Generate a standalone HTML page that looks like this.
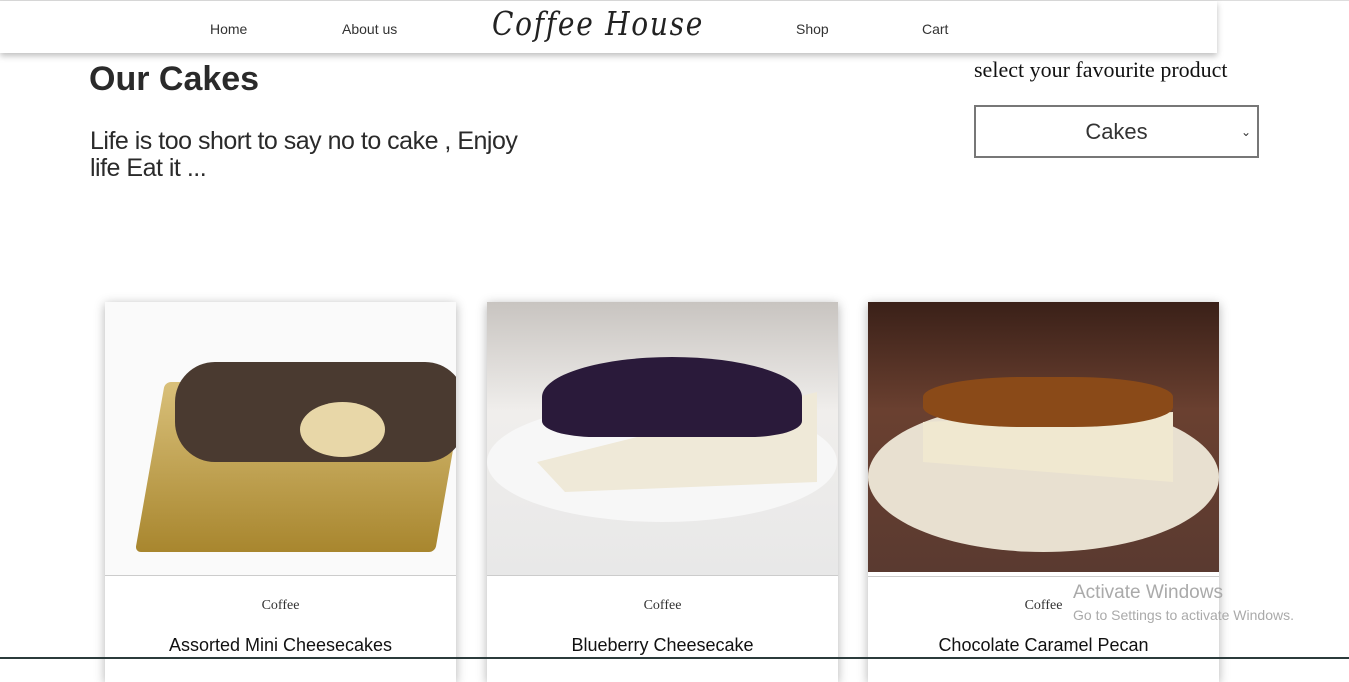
<!DOCTYPE html>
<html><head><meta charset="utf-8"><style>
*{margin:0;padding:0;box-sizing:border-box}
body{width:1349px;height:659px;overflow:hidden;background:#fff;font-family:"Liberation Sans",sans-serif;position:relative;color:#222}
.top{position:absolute;left:0;top:0;width:1349px;height:1px;background:#ddd}
nav{position:absolute;left:0;top:1px;width:1217px;height:52px;background:#fff;box-shadow:0 3px 6px rgba(0,0,0,.25)}
nav a{position:absolute;top:20px;font-size:14px;color:#333;text-decoration:none}
.logo{position:absolute;left:492px;top:3px;font-family:"DejaVu Serif",serif;font-style:italic;font-size:33px;letter-spacing:2px;color:#222;transform:scaleX(0.85);transform-origin:left}
h1{position:absolute;left:89px;top:60px;font-size:34px;font-weight:bold;color:#2a2a2a;letter-spacing:0}
.tag{position:absolute;left:90px;top:128px;font-size:25px;line-height:27px;width:440px;color:#2a2a2a;letter-spacing:-0.5px}
.sel-l{position:absolute;left:974px;top:57px;font-family:"Liberation Serif",serif;font-size:22px;color:#111}
.sel{position:absolute;left:974px;top:105px;width:285px;height:53px;border:2px solid #777;font-size:22px;text-align:center;line-height:50px;color:#333}
.sel span{position:absolute;right:6px;top:0;font-size:12px}
.card{position:absolute;top:302px;width:351px;height:380px;background:#fff;box-shadow:0 2px 10px rgba(0,0,0,.3)}
.img{height:274px;border-bottom:1px solid #ccc;position:relative;overflow:hidden}
.c{position:absolute;top:296px;width:100%;text-align:center;font-family:"Liberation Serif",serif;font-size:14px;color:#333}
.t{position:absolute;top:333px;width:100%;text-align:center;font-size:18px;color:#111}
.win{position:absolute;left:1073px;color:#aaa}
.bar{position:absolute;left:0;top:657px;width:1349px;height:2px;background:#2b3b3b}
</style></head><body>
<div class="top"></div>
<nav><a style="left:210px">Home</a><a style="left:342px">About us</a><div class="logo">Coffee House</div><a style="left:796px">Shop</a><a style="left:922px">Cart</a></nav>
<h1>Our Cakes</h1>
<div class="tag">Life is too short to say no to cake , Enjoy life Eat it ...</div>
<div class="sel-l">select your favourite product</div>
<div class="sel">Cakes<span>⌄</span></div>
<div class="card" style="left:105px"><div class="img" style="background:#fafafa">
<div style="position:absolute;left:45px;top:80px;width:300px;height:170px;background:linear-gradient(#d9c07a,#a8862e);transform:skewX(-10deg);border-radius:6px"></div>
<div style="position:absolute;left:70px;top:60px;width:290px;height:100px;background:#4a3a30;border-radius:40px"></div>
<div style="position:absolute;left:195px;top:100px;width:85px;height:55px;background:#e8d7a8;border-radius:50%"></div>
</div><div class="c">Coffee</div><div class="t">Assorted Mini Cheesecakes</div></div>
<div class="card" style="left:487px"><div class="img" style="background:linear-gradient(#c8c4c0,#f0eeec 40%,#e8e8e8)">
<div style="position:absolute;left:0;top:100px;width:350px;height:120px;background:#f7f7f7;border-radius:50%"></div>
<div style="position:absolute;left:50px;top:90px;width:280px;height:100px;background:#efe9d8;clip-path:polygon(0 70%,100% 0,100% 90%,10% 100%)"></div>
<div style="position:absolute;left:55px;top:55px;width:260px;height:80px;background:#2a1a3a;border-radius:50% 50% 20% 20%"></div>
</div><div class="c">Coffee</div><div class="t">Blueberry Cheesecake</div></div>
<div class="card" style="left:868px"><div class="img" style="height:270px;border:none;background:linear-gradient(#3a2018,#6a4030 40%,#5a3a30)">
<div style="position:absolute;left:0;top:100px;width:351px;height:150px;background:#e8e0d0;border-radius:50%"></div>
<div style="position:absolute;left:55px;top:80px;width:250px;height:100px;background:#f0e8d0;clip-path:polygon(0 40%,100% 30%,100% 100%,0 80%)"></div>
<div style="position:absolute;left:55px;top:75px;width:250px;height:50px;background:#8a4a18;border-radius:40%"></div>
</div><div style="position:absolute;top:274px;width:100%;border-top:1px solid #ccc"></div><div class="c">Coffee</div><div class="t">Chocolate Caramel Pecan</div></div>
<div class="win" style="top:582px;font-size:19px">Activate Windows</div>
<div class="win" style="top:607px;font-size:14px">Go to Settings to activate Windows.</div>
<div class="bar"></div>
</body></html>
